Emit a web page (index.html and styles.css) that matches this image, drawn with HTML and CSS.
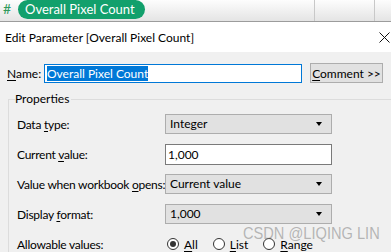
FILE: index.html
```html
<!DOCTYPE html>
<html lang="en">

<head>
    <meta charset="UTF-8">
    <meta name="viewport" content="width=device-width, initial-scale=1.0">
    <title>Edit Parameter</title>
    <link rel="stylesheet" href="styles.css">
</head>

<body>
    <div class="toolbar">
        <span class="hash">#</span>
        <span class="pill">Overall Pixel Count</span>
        <span class="divider d1"></span>
        <span class="divider d2"></span>
    </div>

    <div class="titlebar">
        <span class="title">Edit Parameter [Overall Pixel Count]</span>
        <svg class="close" width="11" height="11" viewBox="0 0 11 11">
            <path d="M0.5 0.5 L10.5 10.5 M10.5 0.5 L0.5 10.5" stroke="#111" stroke-width="1" fill="none" />
        </svg>
    </div>

    <div class="dialog">
        <div class="name-row">
            <label class="name-label"><u>N</u>ame:</label>
            <div class="name-input"><span class="selected">Overall Pixel Count</span></div>
            <button class="comment"><u>C</u>omment &gt;&gt;</button>
        </div>

        <fieldset class="props">
            <legend>Properties</legend>
            <div class="grid">
                <div class="label">Data <u>t</u>ype:</div>
                <div class="select">Integer<span class="arrow"></span></div>

                <div class="label">Current <u>v</u>alue:</div>
                <div class="textbox">1,000</div>

                <div class="label">Value when workbook <u>o</u>pens:</div>
                <div class="select">Current value<span class="arrow"></span></div>

                <div class="label">Display <u>f</u>ormat:</div>
                <div class="select">1,000<span class="arrow"></span></div>

                <div class="label">Allowable values:</div>
                <div class="radios">
                    <span class="radio checked"></span><span class="radio-text"><u>A</u>ll</span>
                    <span class="radio"></span><span class="radio-text"><u>L</u>ist</span>
                    <span class="radio"></span><span class="radio-text"><u>R</u>ange</span>
                </div>
            </div>
        </fieldset>
    </div>

    <div class="watermark">CSDN @LIQING LIN</div>
</body>

</html>
```

FILE: styles.css
```css
* {
    box-sizing: border-box;
    margin: 0;
    padding: 0;
}

body {
    width: 391px;
    height: 252px;
    overflow: hidden;
    position: relative;
    font-family: Lato, 'Segoe UI', sans-serif;
    font-size: 12px;
    color: #000;
    background-color: #f0f0f0;
}

u {
    text-decoration: underline;
    text-underline-offset: 2px;
}

/* top tableau shelf */
.toolbar {
    height: 22px;
    background: linear-gradient(#fdfdfd, #e4e4e4);
    border-bottom: 1px solid #9c9c9c;
    display: flex;
    align-items: flex-start;
    position: relative;
}

.hash {
    color: #2f9a5c;
    font-size: 14px;
    line-height: 18px;
    margin-left: 3px;
    width: 15px;
}

.pill {
    background-color: #12a06c;
    color: white;
    font-size: 13px;
    line-height: 19px;
    height: 19px;
    width: 127px;
    border-radius: 10px;
    padding-left: 7px;
    white-space: nowrap;
}

.divider {
    position: absolute;
    top: 0;
    height: 21px;
    width: 1px;
    background-color: #c8c8c8;
}

.d1 {
    left: 314px;
}

.d2 {
    left: 374px;
}

.titlebar {
    height: 30px;
    background-color: white;
    display: flex;
    align-items: center;
    justify-content: space-between;
    padding: 0 1px 0 5px;
}

.title {
    white-space: nowrap;
}

.dialog {
    width: 420px;
    padding-top: 11px;
}

.name-row {
    display: flex;
    align-items: center;
    height: 20px;
}

.name-label {
    width: 44px;
    padding-left: 7px;
}

.name-input {
    width: 258px;
    height: 19px;
    background-color: white;
    border: 1px solid #0078d7;
    padding-left: 2px;
    line-height: 17px;
    white-space: nowrap;
}

.selected {
    background-color: #0078d7;
    color: white;
}

.comment {
    margin-left: 8px;
    width: 73px;
    height: 20px;
    background-color: #e1e1e1;
    border: 1px solid #adadad;
    font-family: inherit;
    font-size: 12px;
    color: #000;
    white-space: nowrap;
}

.props {
    margin: 10px 0 0 8px;
    border: 1px solid #dcdcdc;
    padding: 0 0 20px 6px;
}

.props legend {
    padding: 0 2px 0 0;
    line-height: 12px;
}

.grid {
    display: grid;
    grid-template-columns: 148px 167px;
    grid-auto-rows: 20px;
    row-gap: 10px;
    padding: 9px 0 0 2px;
    align-items: center;
}

.label {
    white-space: nowrap;
    letter-spacing: -0.25px;
}

.select {
    height: 20px;
    background-color: #e1e1e1;
    border: 1px solid #adadad;
    line-height: 18px;
    padding-left: 4px;
    position: relative;
}

.arrow {
    position: absolute;
    right: 9px;
    top: 7px;
    border-left: 3.5px solid transparent;
    border-right: 3.5px solid transparent;
    border-top: 4px solid #000;
}

.textbox {
    height: 21px;
    background-color: white;
    border: 1px solid #7a7a7a;
    line-height: 19px;
    padding-left: 2px;
}

.radios {
    display: flex;
    align-items: center;
    padding-left: 2px;
}

.radio {
    width: 12px;
    height: 12px;
    border: 1px solid #333;
    border-radius: 50%;
    background-color: white;
    position: relative;
}

.radio.checked::after {
    content: "";
    position: absolute;
    left: 2px;
    top: 2px;
    width: 6px;
    height: 6px;
    border-radius: 50%;
    background-color: #333;
}

.radio-text {
    margin: 0 15px 0 5px;
}

.watermark {
    position: absolute;
    left: 243px;
    top: 224px;
    font-family: 'Liberation Sans', sans-serif;
    font-size: 17px;
    color: rgba(120, 120, 120, 0.5);
    white-space: nowrap;
    transform: scaleX(0.86);
    transform-origin: left top;
}
```
